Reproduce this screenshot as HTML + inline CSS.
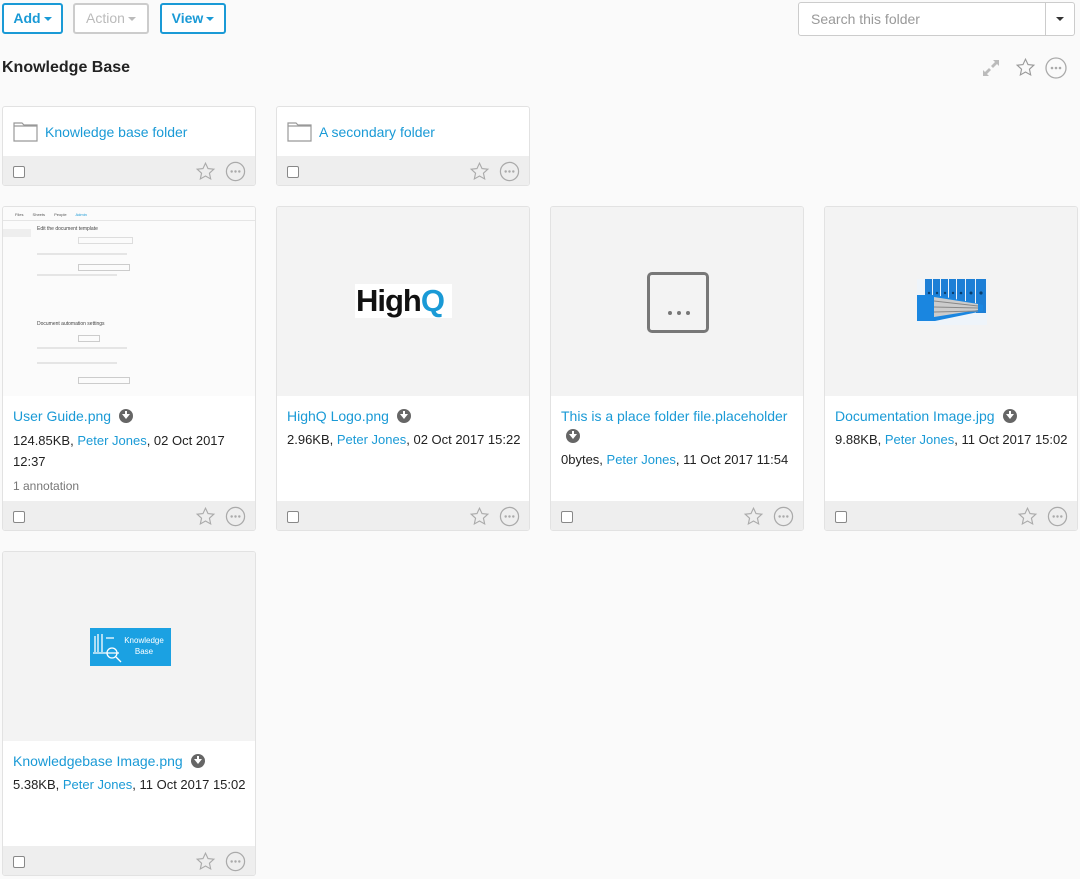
<!DOCTYPE html>
<html><head><meta charset="utf-8"><style>
*{box-sizing:border-box;margin:0;padding:0}
body{width:1080px;height:879px;background:#fafafa;font-family:"Liberation Sans",sans-serif;font-size:14px;color:#222;position:relative;overflow:hidden}
.btn{position:absolute;top:3px;height:31px;border:2px solid #1a9ad6;border-radius:3px;color:#1a9ad6;font-weight:bold;font-size:14px;line-height:27px;text-align:center;background:#fff}
.btn.dis{border-color:#ccc;color:#bbb;font-weight:normal}
.caret{display:inline-block;width:0;height:0;border-left:4px solid transparent;border-right:4px solid transparent;border-top:4px solid currentColor;vertical-align:middle;margin-left:3px}
.card{position:absolute;width:254px;background:#fff;border:1px solid #e2e2e2;border-radius:3px;overflow:hidden}
.foot{position:absolute;left:0;right:0;bottom:0;height:29px;background:#eee}
.cb{position:absolute;left:10px;top:10px;width:12px;height:12px;border:1px solid #888;border-radius:2px;background:#fff}
.star{position:absolute;left:192px;top:5px}
.more{position:absolute;left:222px;top:5px}
a{color:#1a9ad6;text-decoration:none}
.thumb{position:absolute;left:0;top:0;width:252px;height:189px;background:#f3f3f3}
.name{position:absolute;left:10px;top:199px;font-size:14px;line-height:20px;width:240px}
.meta{position:absolute;left:10px;font-size:13px;line-height:20px;color:#222;width:240px}
.dl{display:inline-block;width:14px;height:14px;border-radius:50%;background:#666;vertical-align:-2px;margin-left:8px;position:relative}
.dl:after{content:"";position:absolute;left:3px;top:5px;border-left:4px solid transparent;border-right:4px solid transparent;border-top:5px solid #fff}
.dl:before{content:"";position:absolute;left:6px;top:2px;width:2px;height:4px;background:#fff}
</style></head><body>
<div class="btn" style="left:2px;width:61px">Add<span class="caret"></span></div>
<div class="btn dis" style="left:73px;width:76px">Action<span class="caret"></span></div>
<div class="btn" style="left:160px;width:66px">View<span class="caret"></span></div>
<div style="position:absolute;left:798px;top:2px;width:277px;height:34px;border:1px solid #ccc;border-radius:3px;background:#fff">
<span style="position:absolute;left:12px;top:8px;color:#999;font-size:14px">Search this folder</span>
<div style="position:absolute;left:246px;top:0;width:1px;height:32px;background:#ccc"></div>
<span style="position:absolute;left:257px;top:14px;border-left:4px solid transparent;border-right:4px solid transparent;border-top:4px solid #333"></span></div>
<div style="position:absolute;left:2px;top:59px;font-weight:bold;font-size:16px;color:#222">Knowledge Base</div>
<svg style="position:absolute;left:981px;top:58px" width="20" height="20" viewBox="0 0 20 20" fill="#bbb"><path d="M12 2h6v6l-2-2-4 4-2-2 4-4zM8 18H2v-6l2 2 4-4 2 2-4 4z"/></svg>
<svg style="position:absolute;left:1015px;top:57px" width="21" height="21" viewBox="0 0 24 24" fill="none" stroke="#999" stroke-width="1.3"><path d="M12 2.5l2.9 6.2 6.6.7-5 4.5 1.4 6.6L12 17.2l-5.9 3.3 1.4-6.6-5-4.5 6.6-.7z"/></svg>
<svg style="position:absolute;left:1045px;top:57px" width="22" height="22" viewBox="0 0 22 22"><circle cx="11" cy="11" r="10" fill="none" stroke="#aaa" stroke-width="1.3"/><circle cx="7" cy="11" r="1.3" fill="#aaa"/><circle cx="11" cy="11" r="1.3" fill="#aaa"/><circle cx="15" cy="11" r="1.3" fill="#aaa"/></svg>

<!-- folders -->
<div class="card" style="left:2px;top:106px;height:80px">
<svg style="position:absolute;left:10px;top:13px" width="25" height="22" viewBox="0 0 25 22" fill="none" stroke="#999" stroke-width="1.2"><path d="M1 3h8l2 2h13v16H1z"/><path d="M1 6h23"/></svg>
<a style="position:absolute;left:42px;top:17px">Knowledge base folder</a>
<div class="foot"><div class="cb"></div>
<svg class="star" width="21" height="21" viewBox="0 0 24 24" fill="none" stroke="#aaa" stroke-width="1.3"><path d="M12 2.5l2.9 6.2 6.6.7-5 4.5 1.4 6.6L12 17.2l-5.9 3.3 1.4-6.6-5-4.5 6.6-.7z"/></svg>
<svg class="more" width="21" height="21" viewBox="0 0 22 22"><circle cx="11" cy="11" r="9.5" fill="none" stroke="#aaa" stroke-width="1.3"/><circle cx="7" cy="11" r="1.3" fill="#aaa"/><circle cx="11" cy="11" r="1.3" fill="#aaa"/><circle cx="15" cy="11" r="1.3" fill="#aaa"/></svg></div></div>
<div class="card" style="left:276px;top:106px;height:80px">
<svg style="position:absolute;left:10px;top:13px" width="25" height="22" viewBox="0 0 25 22" fill="none" stroke="#999" stroke-width="1.2"><path d="M1 3h8l2 2h13v16H1z"/><path d="M1 6h23"/></svg>
<a style="position:absolute;left:42px;top:17px">A secondary folder</a>
<div class="foot"><div class="cb"></div>
<svg class="star" width="21" height="21" viewBox="0 0 24 24" fill="none" stroke="#aaa" stroke-width="1.3"><path d="M12 2.5l2.9 6.2 6.6.7-5 4.5 1.4 6.6L12 17.2l-5.9 3.3 1.4-6.6-5-4.5 6.6-.7z"/></svg>
<svg class="more" width="21" height="21" viewBox="0 0 22 22"><circle cx="11" cy="11" r="9.5" fill="none" stroke="#aaa" stroke-width="1.3"/><circle cx="7" cy="11" r="1.3" fill="#aaa"/><circle cx="11" cy="11" r="1.3" fill="#aaa"/><circle cx="15" cy="11" r="1.3" fill="#aaa"/></svg></div></div>

<!-- file 1 -->
<div class="card" style="left:2px;top:206px;height:325px">
<div class="thumb" style="background:#fbfbfb">
<div style="position:absolute;left:0;top:0;width:252px;height:14px;border-bottom:1px solid #e5e5e5;font-size:4px;color:#555;padding:5px 0 0 12px;word-spacing:8px">Files Sheets People <span style="color:#1a9ad6">Admin</span></div>
<div style="position:absolute;left:0;top:22px;width:28px;height:8px;background:#eee"></div>
<div style="position:absolute;left:34px;top:19px;font-size:5px;color:#444">Edit the document template</div>
<div style="position:absolute;left:75px;top:30px;width:55px;height:7px;border:1px solid #ddd"></div>
<div style="position:absolute;left:75px;top:57px;width:52px;height:7px;border:1px solid #ccc"></div>
<div style="position:absolute;left:34px;top:114px;font-size:5px;color:#444">Document automation settings</div>
<div style="position:absolute;left:75px;top:128px;width:22px;height:7px;border:1px solid #ccc"></div>
<div style="position:absolute;left:75px;top:170px;width:52px;height:7px;border:1px solid #ccc"></div>
<div style="position:absolute;left:34px;top:46px;width:90px;height:2px;background:#e5e5e5"></div>
<div style="position:absolute;left:34px;top:67px;width:80px;height:2px;background:#e5e5e5"></div>
<div style="position:absolute;left:34px;top:140px;width:90px;height:2px;background:#e5e5e5"></div>
<div style="position:absolute;left:34px;top:155px;width:80px;height:2px;background:#e5e5e5"></div>
</div>
<div class="name"><a>User Guide.png</a><span class="dl"></span></div>
<div class="meta" style="top:223px;line-height:21px">124.85KB, <a>Peter Jones</a>, 02 Oct 2017 12:37</div>
<div class="meta" style="top:269px;color:#777;font-size:12px">1 annotation</div>
<div class="foot"><div class="cb"></div>
<svg class="star" width="21" height="21" viewBox="0 0 24 24" fill="none" stroke="#aaa" stroke-width="1.3"><path d="M12 2.5l2.9 6.2 6.6.7-5 4.5 1.4 6.6L12 17.2l-5.9 3.3 1.4-6.6-5-4.5 6.6-.7z"/></svg>
<svg class="more" width="21" height="21" viewBox="0 0 22 22"><circle cx="11" cy="11" r="9.5" fill="none" stroke="#aaa" stroke-width="1.3"/><circle cx="7" cy="11" r="1.3" fill="#aaa"/><circle cx="11" cy="11" r="1.3" fill="#aaa"/><circle cx="15" cy="11" r="1.3" fill="#aaa"/></svg></div></div>

<!-- file 2 -->
<div class="card" style="left:276px;top:206px;height:325px">
<div class="thumb"><div style="position:absolute;left:78px;top:77px;width:97px;height:34px;background:#fff;font-weight:bold;font-size:31px;line-height:34px;letter-spacing:-1px;color:#111;padding-left:1px">High<span style="color:#1a9ad6">Q</span></div></div>
<div class="name"><a>HighQ Logo.png</a><span class="dl"></span></div>
<div class="meta" style="top:223px">2.96KB, <a>Peter Jones</a>, 02 Oct 2017 15:22</div>
<div class="foot"><div class="cb"></div>
<svg class="star" width="21" height="21" viewBox="0 0 24 24" fill="none" stroke="#aaa" stroke-width="1.3"><path d="M12 2.5l2.9 6.2 6.6.7-5 4.5 1.4 6.6L12 17.2l-5.9 3.3 1.4-6.6-5-4.5 6.6-.7z"/></svg>
<svg class="more" width="21" height="21" viewBox="0 0 22 22"><circle cx="11" cy="11" r="9.5" fill="none" stroke="#aaa" stroke-width="1.3"/><circle cx="7" cy="11" r="1.3" fill="#aaa"/><circle cx="11" cy="11" r="1.3" fill="#aaa"/><circle cx="15" cy="11" r="1.3" fill="#aaa"/></svg></div></div>

<!-- file 3 -->
<div class="card" style="left:550px;top:206px;height:325px">
<div class="thumb"><div style="position:absolute;left:96px;top:65px;width:62px;height:61px;border:3px solid #777;border-radius:5px"></div>
<div style="position:absolute;left:117px;top:104px;font-size:0">
<span style="display:inline-block;width:4px;height:4px;border-radius:50%;background:#777;margin-right:5px"></span><span style="display:inline-block;width:4px;height:4px;border-radius:50%;background:#777;margin-right:5px"></span><span style="display:inline-block;width:4px;height:4px;border-radius:50%;background:#777"></span></div></div>
<div class="name"><a>This is a place folder file.placeholder</a><br><span class="dl" style="margin-left:5px"></span></div>
<div class="meta" style="top:243px">0bytes, <a>Peter Jones</a>, 11 Oct 2017 11:54</div>
<div class="foot"><div class="cb"></div>
<svg class="star" width="21" height="21" viewBox="0 0 24 24" fill="none" stroke="#aaa" stroke-width="1.3"><path d="M12 2.5l2.9 6.2 6.6.7-5 4.5 1.4 6.6L12 17.2l-5.9 3.3 1.4-6.6-5-4.5 6.6-.7z"/></svg>
<svg class="more" width="21" height="21" viewBox="0 0 22 22"><circle cx="11" cy="11" r="9.5" fill="none" stroke="#aaa" stroke-width="1.3"/><circle cx="7" cy="11" r="1.3" fill="#aaa"/><circle cx="11" cy="11" r="1.3" fill="#aaa"/><circle cx="15" cy="11" r="1.3" fill="#aaa"/></svg></div></div>

<!-- file 4 -->
<div class="card" style="left:824px;top:206px;height:325px">
<div class="thumb"><svg style="position:absolute;left:92px;top:72px" width="70" height="46" viewBox="0 0 70 46">
<rect width="70" height="46" fill="#eef4fa"/>
<g fill="#1d7fd6"><rect x="8" y="0" width="7" height="30"/><rect x="16" y="0" width="7" height="30"/><rect x="24" y="0" width="7" height="30"/><rect x="32" y="0" width="7" height="30"/><rect x="40" y="0" width="8" height="30"/><rect x="49" y="0" width="9" height="30"/><rect x="59" y="0" width="10" height="34"/></g>
<g fill="#0a3f6e"><circle cx="12" cy="14" r="1.2"/><circle cx="20" cy="14" r="1.2"/><circle cx="28" cy="14" r="1.2"/><circle cx="36" cy="14" r="1.2"/><circle cx="44" cy="14" r="1.3"/><circle cx="54" cy="14" r="1.5"/><circle cx="64" cy="14" r="1.6"/></g>
<path d="M0 16h18l40 8 8 2v6L18 42H0z" fill="#1a86e0"/>
<path d="M17 18l44 7v6L17 38z" fill="#ccc"/><path d="M17 22l44 5M17 28l44 1M17 33l44-1" stroke="#888" stroke-width="1"/></svg></div>
<div class="name"><a>Documentation Image.jpg</a><span class="dl"></span></div>
<div class="meta" style="top:223px">9.88KB, <a>Peter Jones</a>, 11 Oct 2017 15:02</div>
<div class="foot"><div class="cb"></div>
<svg class="star" width="21" height="21" viewBox="0 0 24 24" fill="none" stroke="#aaa" stroke-width="1.3"><path d="M12 2.5l2.9 6.2 6.6.7-5 4.5 1.4 6.6L12 17.2l-5.9 3.3 1.4-6.6-5-4.5 6.6-.7z"/></svg>
<svg class="more" width="21" height="21" viewBox="0 0 22 22"><circle cx="11" cy="11" r="9.5" fill="none" stroke="#aaa" stroke-width="1.3"/><circle cx="7" cy="11" r="1.3" fill="#aaa"/><circle cx="11" cy="11" r="1.3" fill="#aaa"/><circle cx="15" cy="11" r="1.3" fill="#aaa"/></svg></div></div>

<!-- file 5 -->
<div class="card" style="left:2px;top:551px;height:325px">
<div class="thumb"><div style="position:absolute;left:87px;top:76px;width:81px;height:38px;background:#1ba1e2">
<svg style="position:absolute;left:2px;top:4px" width="34" height="32" viewBox="0 0 34 32" fill="none" stroke="#fff" stroke-width="1.3"><path d="M3 4v16M6 2v18M10 2v18M14 6h8M1 21h26"/><circle cx="20" cy="21" r="5"/><path d="M24 25l5 5"/></svg>
<div style="position:absolute;left:30px;top:7px;color:#fff;font-size:8px;line-height:11px;text-align:center;width:48px">Knowledge<br>Base</div></div></div>
<div class="name"><a>Knowledgebase Image.png</a><span class="dl"></span></div>
<div class="meta" style="top:223px">5.38KB, <a>Peter Jones</a>, 11 Oct 2017 15:02</div>
<div class="foot"><div class="cb"></div>
<svg class="star" width="21" height="21" viewBox="0 0 24 24" fill="none" stroke="#aaa" stroke-width="1.3"><path d="M12 2.5l2.9 6.2 6.6.7-5 4.5 1.4 6.6L12 17.2l-5.9 3.3 1.4-6.6-5-4.5 6.6-.7z"/></svg>
<svg class="more" width="21" height="21" viewBox="0 0 22 22"><circle cx="11" cy="11" r="9.5" fill="none" stroke="#aaa" stroke-width="1.3"/><circle cx="7" cy="11" r="1.3" fill="#aaa"/><circle cx="11" cy="11" r="1.3" fill="#aaa"/><circle cx="15" cy="11" r="1.3" fill="#aaa"/></svg></div></div>
</body></html>
